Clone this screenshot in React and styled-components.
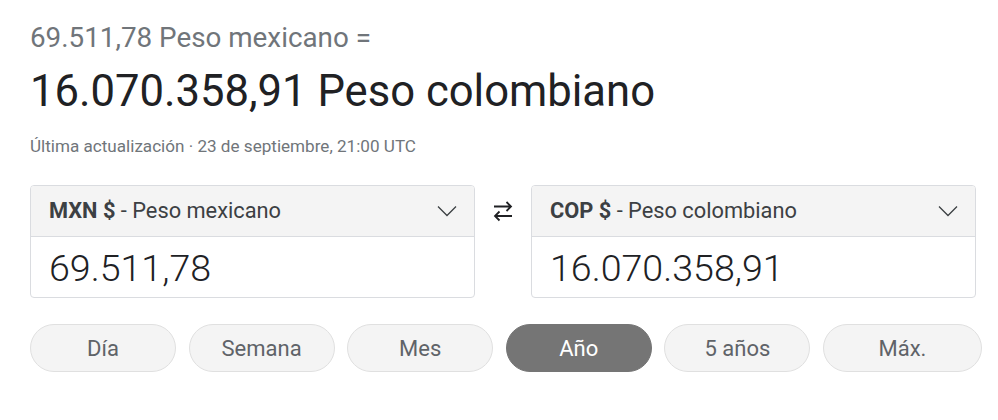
import React from 'react'
import styled, { createGlobalStyle } from 'styled-components'

const GlobalStyle = createGlobalStyle`
  html, body {
    margin: 0;
    padding: 0;
    background: #fff;
  }
  body {
    font-family: Roboto, "Liberation Sans", Arial, sans-serif;
  }
`

const ranges = ['Día', 'Semana', 'Mes', 'Año', '5 años', 'Máx.']

const Chevron = () => (
  <svg width="20" height="12" viewBox="0 0 20 12" fill="none">
    <path d="M1 1.5 L10 10.5 L19 1.5" stroke="#3c4043" strokeWidth="1.3" />
  </svg>
)

const SwapIcon = () => (
  <svg width="22" height="22" viewBox="0 0 22 22" fill="none">
    <path d="M2 6.5 H19 M14.5 2 L19 6.5 L14.5 11" stroke="#202124" strokeWidth="1.8" />
    <path d="M20 16 H3 M7.5 11.5 L3 16 L7.5 20.5" stroke="#202124" strokeWidth="1.8" />
  </svg>
)

const CurrencyBox = ({ code, name, value }) => (
  <Box>
    <BoxHeader>
      <HeaderLabel>
        <Code>{code}</Code> - {name}
      </HeaderLabel>
      <Chevron />
    </BoxHeader>
    <BoxValue>{value}</BoxValue>
  </Box>
)

export default function App() {
  return (
    <Page>
      <GlobalStyle />
      <Subtitle>69.511,78 Peso mexicano =</Subtitle>
      <Result>16.070.358,91 Peso colombiano</Result>
      <Updated>Última actualización · 23 de septiembre, 21:00 UTC</Updated>
      <Converter>
        <CurrencyBox code="MXN $" name="Peso mexicano" value="69.511,78" />
        <Swap>
          <SwapIcon />
        </Swap>
        <CurrencyBox code="COP $" name="Peso colombiano" value="16.070.358,91" />
      </Converter>
      <Ranges>
        {ranges.map((r, i) => (
          <RangeButton key={r} $active={r === 'Año'} $wide={i === ranges.length - 1}>
            {r}
          </RangeButton>
        ))}
      </Ranges>
    </Page>
  )
}

const Page = styled.div`
  padding: 22px 0 0 30px;
  width: 998px;
  box-sizing: border-box;
`

const Subtitle = styled.div`
  font-size: 27.8px;
  line-height: 32px;
  color: #70757a;
`

const Result = styled.div`
  margin-top: 10px;
  font-size: 43.6px;
  line-height: 56px;
  color: #202124;
`

const Updated = styled.div`
  margin-top: 16px;
  font-size: 17.1px;
  line-height: 20px;
  color: #70757a;
`

const Converter = styled.div`
  margin-top: 29px;
  display: flex;
  align-items: flex-start;
  width: 946px;
`

const Box = styled.div`
  flex: 1;
  border: 1px solid #dadce0;
  border-radius: 4px;
  overflow: hidden;
`

const BoxHeader = styled.div`
  height: 50px;
  display: flex;
  align-items: center;
  justify-content: space-between;
  padding: 0 17px 0 18px;
  background: #f4f4f4;
  border-bottom: 1px solid #dadce0;
`

const HeaderLabel = styled.div`
  font-size: 21.8px;
  line-height: 50px;
  color: #3c4043;
`

const Code = styled.span`
  font-weight: 700;
`

const BoxValue = styled.div`
  height: 58px;
  padding: 2px 18px 0;
  font-size: 37.6px;
  font-weight: 300;
  line-height: 58px;
  color: #202124;
`

const Swap = styled.div`
  width: 56px;
  height: 52px;
  display: flex;
  align-items: center;
  justify-content: center;
`

const Ranges = styled.div`
  margin-top: 26px;
  display: flex;
  gap: 12.6px;
`

const RangeButton = styled.button`
  width: ${(p) => (p.$wide ? '159px' : '146px')};
  height: 48px;
  border-radius: 24px;
  border: 1px solid ${(p) => (p.$active ? '#757575' : '#e0e0e0')};
  background: ${(p) => (p.$active ? '#757575' : '#f4f4f4')};
  color: ${(p) => (p.$active ? '#fff' : '#5f6368')};
  font-family: Roboto, "Liberation Sans", Arial, sans-serif;
  font-size: 22px;
  padding: 0;
  cursor: pointer;
`
